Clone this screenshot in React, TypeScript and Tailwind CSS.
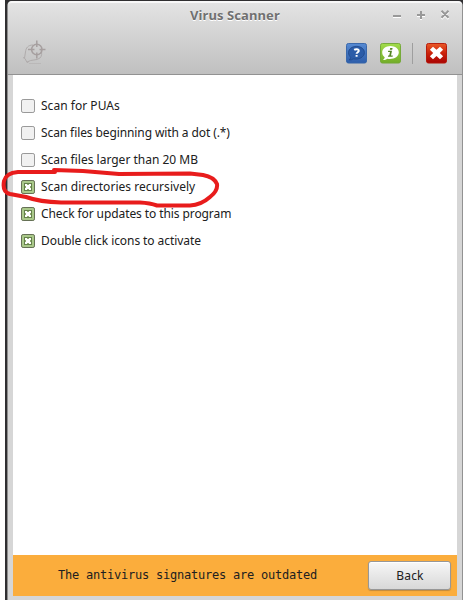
import React from "react";

const options = [
  { label: "Scan for PUAs", checked: false, tracking: "tracking-[0.03px]" },
  { label: "Scan files beginning with a dot (.*)", checked: false, tracking: "tracking-[-0.1px]" },
  { label: "Scan files larger than 20 MB", checked: false, tracking: "tracking-[0px]" },
  { label: "Scan directories recursively", checked: true, tracking: "tracking-[0.04px]" },
  { label: "Check for updates to this program", checked: true, tracking: "tracking-[-0.09px]" },
  { label: "Double click icons to activate", checked: true, tracking: "tracking-[-0.07px]" },
];

function CheckBox({ checked }: { checked: boolean }) {
  return (
    <svg width="14" height="14" viewBox="0 0 14 14" className="block shrink-0">
      <rect x="0.5" y="0.5" width="13" height="13" rx="1.6" fill={checked ? "#aac98a" : "#f1f1f1"} stroke={checked ? "#657055" : "#999"} />
      {checked && (
        <>
          <rect x="3.5" y="3.5" width="7" height="7" fill="#8fac70" stroke="#65804c" />
          <path d="M4 4h2v1h2V4h2v2H9v2h1v2H8V9H6v1H4V8h1V6H4z" fill="#fff" />
        </>
      )}
    </svg>
  );
}

function ScanIcon() {
  return (
    <svg width="24" height="26" viewBox="0 0 24 26" fill="none" className="block">
      <path d="M11 5C6 5 3.8 8 3.5 12L2.5 18M1 17.5l2 1 2 4 2-1M5 22c5-3 9-1 13-4 2-2 2-5 1-8" stroke="#b0acac" />
      <path d="M7 23.5h12" stroke="#b5b2b2" strokeWidth="0.7" />
      <circle cx="14.8" cy="9.5" r="5.2" stroke="#a69f9f" strokeWidth="1.5" />
      <path d="M14.8 .5v6.5M14.8 12.5v6M6 9.5h6.5M17.5 9.5h6" stroke="#a69f9f" strokeWidth="1.5" />
    </svg>
  );
}

function HelpIcon() {
  return (
    <svg width="21" height="21" viewBox="0 0 21 22" preserveAspectRatio="none" className="block">
      <defs><linearGradient id="blue" x2="0" y2="1"><stop stopColor="#578bd3" /><stop offset="1" stopColor="#2d5daa" /></linearGradient></defs>
      <rect x="0.5" y="0.5" width="20" height="20.5" rx="2" fill="url(#blue)" stroke="#3866aa" />
      <path d="M10.5 3.5c-4.5 0-8 2.9-8 6.5 0 2.2 1 3.8 2.2 5-.1 1.1-.6 2-1.5 2.8 1.8 0 3-.4 4-1.2 5.7 1.2 11.2-1.8 11.2-6.6 0-3.6-3.4-6.5-7.9-6.5z" fill="#2b5ca8" stroke="#1f4787" strokeWidth="0.8" />
      <path d="M8.2 7.2c1.5-1.1 4.6-.9 4.6.9 0 1.5-2.2 1.5-2.2 3.2M10.6 12.5v2" stroke="#fff" strokeWidth="2" fill="none" />
    </svg>
  );
}

function InfoIcon() {
  return (
    <svg width="21" height="21" viewBox="0 0 21 22" preserveAspectRatio="none" className="block">
      <defs><linearGradient id="green" x2="0" y2="1"><stop stopColor="#a2dc4b" /><stop offset="1" stopColor="#72ac28" /></linearGradient></defs>
      <rect x="0.5" y="0.5" width="20" height="20.5" rx="2" fill="url(#green)" stroke="#75a938" />
      <path d="M10.5 3.2c-4.6 0-8.3 2.9-8.3 6.7 0 2.1 1 3.8 2.5 5-.2 1.2-.7 2-1.7 2.8 2 0 3.3-.4 4.3-1.3 5.8 1.2 11.5-1.8 11.5-6.5 0-3.8-3.7-6.7-8.3-6.7z" fill="#fff" />
      <path d="M10.2 5.2h2.4l-.4 1.9H9.8zM8.2 8.2h3.8l-1 4.8h1.8l-.2 1.3H7.9l.2-1.2h1.1l.8-3.6H8z" fill="#558625" />
    </svg>
  );
}

function ExitIcon() {
  return (
    <svg width="21" height="21" viewBox="0 0 21 22" preserveAspectRatio="none" className="block">
      <defs><linearGradient id="red" x2="0" y2="1"><stop stopColor="#ea5a27" /><stop offset=".5" stopColor="#cb220b" /><stop offset="1" stopColor="#a90303" /></linearGradient></defs>
      <rect x="0.5" y="0.5" width="20" height="20.5" rx="2" fill="url(#red)" stroke="#b51a0b" />
      <path d="M7 3.8 10.5 7.2l3.5-3.4 3.1 3.2-3.3 3.5 3.3 3.4-3.1 3.2-3.5-3.4-3.5 3.4-3.1-3.2 3.3-3.4L3.9 7z" fill="#fff" />
    </svg>
  );
}

function WindowControls() {
  return (
    <svg width="60" height="14" viewBox="0 0 60 14" className="block" fill="none">
      <path d="M1 11h8M25 10h8M29 6v8M49.5 6l7 7m0-7-7 7" stroke="#fff" strokeWidth="2" />
      <path d="M1 10h8M25 9h8M29 5v8M49.5 4.8l7 7m0-7-7 7" stroke="#999" strokeWidth="2" />
    </svg>
  );
}

export default function App() {
  return (
    <div className="relative h-[600px] w-[463px] overflow-hidden bg-white pl-[5px] font-['Noto_Sans',sans-serif] text-[#202020]">
      <div className="h-full bg-[#302f31] pl-[2px] pt-px">
        <div className="flex h-full w-[456px] flex-col rounded-t-[5px] border-l border-r border-l-[#8e8e8e] border-r-[#929292] bg-[#d6d6d6]">
          <header className="h-[74px] shrink-0 rounded-t-[4px] border-b border-t-2 border-b-[#929292] border-t-[#f8f8f8] bg-gradient-to-b from-[#e3e3e3] to-[#c0c0c0]">
            <div className="flex h-[27px] items-start">
              <div className="w-[182px] shrink-0" />
              <h1 className="mt-[3px] w-[90px] whitespace-nowrap text-[13px] font-bold leading-[18px] tracking-[0.09px] text-[#707070] [text-shadow:0_1px_0_#fff]">Virus Scanner</h1>
              <div className="ml-[112px] mt-[3px]"><WindowControls /></div>
            </div>
            <div className="flex h-[44px] items-start pl-[14px] pr-[14px] pt-[10px]">
              <ScanIcon />
              <div className="ml-auto mr-px flex items-center pt-[3px]">
                <HelpIcon />
                <div className="ml-[13px]"><InfoIcon /></div>
                <div className="ml-[11px] h-[21px] w-px bg-[#9e9e9e]" />
                <div className="ml-[13px]"><ExitIcon /></div>
              </div>
            </div>
          </header>
          <main className="ml-[5px] mr-[5px] flex h-[480px] shrink-0 flex-col bg-white pl-2 pt-[17px]">
            {options.map((option) => (
              <div key={option.label} className="flex h-[27px] shrink-0 items-center gap-[6px] whitespace-nowrap text-[12px] leading-[18px]">
                <CheckBox checked={option.checked} />
                <span className={`mt-px ${option.tracking}`}>{option.label}</span>
              </div>
            ))}
          </main>
          <footer className="mx-[5px] flex h-[41px] shrink-0 items-center bg-[#fbad3c] pl-[45px] pr-[6px]">
            <span className="mt-[-2px] whitespace-nowrap font-['DejaVu_Sans_Mono',monospace] text-[12px] tracking-[-0.224px]">The antivirus signatures are outdated</span>
            <button className="ml-auto h-[29px] w-[83px] rounded-[3px] border border-[#979797] bg-gradient-to-b from-[#f7f7f7] to-[#d8d8d8] pl-px pt-px text-[12px] leading-[18px] tracking-[0.15px] shadow-[inset_0_1px_0_#fff,0_1px_1px_#c18a3c]">Back</button>
          </footer>
        </div>
      </div>
      <svg width="220" height="42" viewBox="0 166 220 42" className="pointer-events-none absolute left-0 top-[166px]" fill="none">
        <path d="M55 172 L18 172 Q6 173 4 181 Q2 192 10 194 L26 197 Q40 202 61 202.5 L140 202.5 Q150 203 157 205.5 L190 205.5 Q201 205 210 197 Q218 191 217 184 Q214 177 203 175 L190 173.5 L119 174 L83 171 L54 170" stroke="#e81c1c" strokeWidth="4" strokeLinecap="round" strokeLinejoin="round" />
      </svg>
    </div>
  );
}
